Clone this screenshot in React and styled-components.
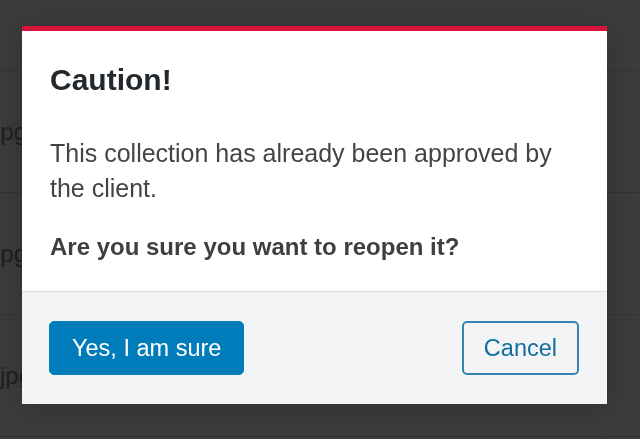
import React from 'react';
import styled, { createGlobalStyle } from 'styled-components';

const files = [
  { name: 'IMG_4021.jpg', end: 27 },
  { name: 'IMG_4022.jpg', end: 27 },
  { name: 'IMG_4023.jpg', end: 32 },
  { name: 'IMG_4024.jpg', end: 27 },
];

const App = () => {
  return (
    <>
      <GlobalStyle />
      <List>
        {files.map((file) => (
          <Row key={file.name}>
            <FileName end={file.end}>{file.name}</FileName>
          </Row>
        ))}
      </List>
      <Backdrop>
        <Modal role="dialog" aria-labelledby="caution-title">
          <Body>
            <Title id="caution-title">Caution!</Title>
            <Message>This collection has already been approved by the client.</Message>
            <Question>Are you sure you want to reopen it?</Question>
          </Body>
          <Footer>
            <Button primary>Yes, I am sure</Button>
            <Button>Cancel</Button>
          </Footer>
        </Modal>
      </Backdrop>
    </>
  );
};

const GlobalStyle = createGlobalStyle`
  html, body {
    margin: 0;
    padding: 0;
    background: #3c3c3c;
    font-family: "Liberation Sans", Arial, sans-serif;
    overflow: hidden;
  }
`;

const List = styled.div`
  padding-top: 70px;
  height: 439px;
  box-sizing: border-box;
  overflow: hidden;
`;

const Row = styled.div`
  display: flex;
  align-items: center;
  height: 122px;
  box-sizing: border-box;
  border-top: 1px solid #343434;
`;

const FileName = styled.span`
  width: 200px;
  flex-shrink: 0;
  margin-left: ${(p) => p.end - 200}px;
  text-align: right;
  font-size: 24px;
  color: #1f1f1f;
  white-space: nowrap;
`;

const Backdrop = styled.div`
  position: fixed;
  inset: 0;
  display: flex;
  align-items: flex-start;
  justify-content: flex-start;
  padding: 26px 0 0 22px;
`;

const Modal = styled.div`
  width: 585px;
  background: #fff;
  border-top: 5px solid #d9143a;
  box-shadow: 0 3px 30px rgba(0, 0, 0, 0.2);
`;

const Body = styled.div`
  padding: 31px 28px 27px;
`;

const Title = styled.h2`
  margin: 0;
  font-size: 30px;
  line-height: 36px;
  font-weight: 700;
  color: #23282d;
`;

const Message = styled.p`
  margin: 38px 0 0;
  font-size: 25px;
  line-height: 35px;
  color: #444;
`;

const Question = styled.p`
  margin: 24px 0 0;
  font-size: 24px;
  line-height: 34px;
  font-weight: 700;
  color: #3f3f3f;
`;

const Footer = styled.div`
  display: flex;
  justify-content: space-between;
  align-items: center;
  padding: 29px 28px 29px 27px;
  background: #f3f4f5;
  border-top: 1px solid #dddddd;
`;

const Button = styled.button`
  height: 54px;
  padding: ${(p) => (p.primary ? '0 22px' : '0 20px')};
  font-family: inherit;
  font-size: 23.5px;
  border-radius: 5px;
  cursor: pointer;
  background: ${(p) => (p.primary ? '#007cba' : 'transparent')};
  color: ${(p) => (p.primary ? '#fff' : '#0f6e9b')};
  border: ${(p) => (p.primary ? '1px solid #007cba' : '2px solid #3585ae')};
`;

export default App;
